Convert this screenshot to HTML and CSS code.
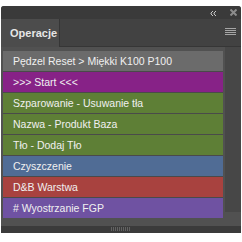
FILE: index.html
```html
<!DOCTYPE html>
<html>
<head>
<meta charset="utf-8">
<link rel="stylesheet" href="styles.css">
</head>
<body>
<div class="panel">
  <div class="topbar">
    <svg class="ic-collapse" width="7" height="5" viewBox="0 0 7 5"><path d="M3 0 L1 2 L1 3 L3 5 M6 0 L4 2 L4 3 L6 5" fill="none" stroke="#c8c8c8" stroke-width="1"/></svg>
    <svg class="ic-close" width="7" height="7" viewBox="0 0 7 7"><path d="M0.5 0.5 L6.5 6.5 M6.5 0.5 L0.5 6.5" stroke="#8c8c8c" stroke-width="2"/></svg>
  </div>
  <div class="tabs">
    <div class="tab">Operacje</div>
    <div class="tabfill">
      <svg class="ic-menu" width="11" height="8" viewBox="0 0 11 8"><path d="M0 0.5 H11 M0 2.5 H11 M0 4.5 H11 M0 6.5 H11" stroke="#a6a6a6" stroke-width="1"/></svg>
    </div>
  </div>
  <div class="body">
    <div class="list">
      <div class="row gray">Pędzel Reset &gt; Miękki K100 P100</div>
      <div class="row purple">&gt;&gt;&gt; Start &lt;&lt;&lt;</div>
      <div class="row green">Szparowanie - Usuwanie tła</div>
      <div class="row green">Nazwa - Produkt Baza</div>
      <div class="row green">Tło - Dodaj Tło</div>
      <div class="row blue">Czyszczenie</div>
      <div class="row red">D&amp;B Warstwa</div>
      <div class="row violet"># Wyostrzanie FGP</div>
    </div>
    <div class="scroll"></div>
  </div>
  <div class="footer"><div class="grip"></div></div>
</div>
</body>
</html>
```
FILE: styles.css
```css
html, body { margin: 0; padding: 0; background: #ffffff; }
.panel {
  margin: 6px 1px 0 1px;
  width: 240px;
  height: 227px;
  background: #515151;
  border-radius: 3px 3px 0 0;
  overflow: hidden;
  display: flex;
  flex-direction: column;
  font-family: "Liberation Sans", Arial, sans-serif;
}
.topbar {
  height: 13px;
  background: #3a3a3a;
  display: flex;
  align-items: center;
  justify-content: flex-end;
  gap: 13px;
  padding-right: 4px;
  flex: none;
}
.ic-collapse { display: block; margin-top: 1px; }
.ic-close { display: block; }
.tabs {
  height: 28px;
  display: flex;
  flex: none;
  background: #424242;
}
.tab {
  width: 59px;
  background: #4c4c4c;
  color: #e6e6e6;
  font-weight: bold;
  font-size: 11px;
  line-height: 28px;
  padding-left: 9px;
  box-sizing: border-box;
  border-right: 1px solid #363636;
}
.tabfill {
  flex: 1;
  display: flex;
  align-items: center;
  justify-content: flex-end;
  padding-right: 5px;
  border-bottom: 1px solid #363636;
  box-sizing: border-box;
}
.ic-menu { display: block; margin-top: -2px; }
.body {
  flex: 1;
  display: flex;
  align-items: flex-start;
  gap: 2px;
  padding: 4px 0 0 2px;
}
.list {
  width: 220px;
  display: flex;
  flex-direction: column;
  gap: 1px;
  background: #4a4a4a;
}
.row {
  height: 20px;
  line-height: 20px;
  padding-left: 10px;
  font-size: 10.5px;
  color: #f0f0f0;
  white-space: nowrap;
}
.gray { background: #6b6b6b; }
.purple { background: #872287; }
.green { background: #5e7f36; }
.blue { background: #506c95; }
.red { background: #a8423f; }
.violet { background: #6f52a2; }
.scroll {
  width: 16px;
  height: 165px;
  margin-top: -4px;
  background: #474747;
}
.footer {
  flex: none;
  height: 7px;
  background: #3b3b3b;
  display: flex;
  justify-content: center;
  align-items: flex-start;
}
.grip {
  width: 20px;
  height: 4px;
  margin-top: 1px;
  background: repeating-linear-gradient(90deg, #626262 0 1px, transparent 1px 2px);
}
```
